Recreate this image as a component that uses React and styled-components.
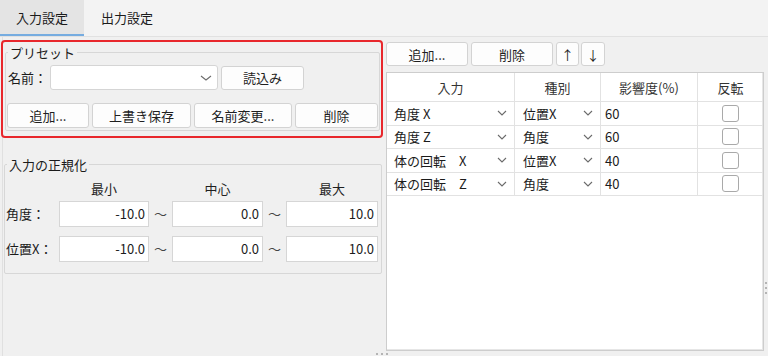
import React from "react";
import styled, { createGlobalStyle } from "styled-components";

const GlobalStyle = createGlobalStyle`
  html, body {
    margin: 0;
    padding: 0;
    background: #f0f0f0;
  }
  body {
    font-family: "Noto Sans CJK JP", "Noto Sans", sans-serif;
    font-size: 13px;
    color: #1b1b1b;
  }
  * {
    box-sizing: border-box;
  }
`;

const rows = [
  { input: "角度 X", kind: "位置X", rate: "60" },
  { input: "角度 Z", kind: "角度", rate: "60" },
  { input: "体の回転　X", kind: "位置X", rate: "40" },
  { input: "体の回転　Z", kind: "角度", rate: "40" },
];

const normRows = [
  { label: "角度：", values: ["-10.0", "0.0", "10.0"] },
  { label: "位置X：", values: ["-10.0", "0.0", "10.0"] },
];

const Chevron = ({ w = 10 }) => (
  <svg width={w} height="6" viewBox={`0 0 ${w} 6`}>
    <polyline
      points={`1,1 ${w / 2},5 ${w - 1},1`}
      fill="none"
      stroke="#6b6b6b"
      strokeWidth="1.1"
    />
  </svg>
);

const App = () => {
  return (
    <Screen>
      <GlobalStyle />
      <TabBar>
        <Tab active w={84}>入力設定</Tab>
        <Tab w={86}>出力設定</Tab>
      </TabBar>
      <Main>
        <LeftPane>
          <Highlight>
            <Group>
              <Legend>プリセット</Legend>
              <NameRow>
                <NameLabel>名前：</NameLabel>
                <Combo>
                  <Chevron w={12} />
                </Combo>
                <Button w={83}>読込み</Button>
              </NameRow>
              <ButtonRow>
                <Button w={82}>追加...</Button>
                <Button w={99}>上書き保存</Button>
                <Button w={98}>名前変更...</Button>
                <Button w={83}>削除</Button>
              </ButtonRow>
            </Group>
          </Highlight>
          <NormGroup>
            <Legend>入力の正規化</Legend>
            <NormHead>
              <span />
              <ColHead>最小</ColHead>
              <span />
              <ColHead>中心</ColHead>
              <span />
              <ColHead>最大</ColHead>
            </NormHead>
            <NormGrid>
              {normRows.map((r) => (
                <React.Fragment key={r.label}>
                  <RowLabel>{r.label}</RowLabel>
                  <NumBox>{r.values[0]}</NumBox>
                  <Tilde>〜</Tilde>
                  <NumBox>{r.values[1]}</NumBox>
                  <Tilde>〜</Tilde>
                  <NumBox>{r.values[2]}</NumBox>
                </React.Fragment>
              ))}
            </NormGrid>
          </NormGroup>
        </LeftPane>
        <RightPane>
          <Toolbar>
            <Button w={82}>追加...</Button>
            <Button w={82}>削除</Button>
            <Button w={23}>↑</Button>
            <Button w={24} style={{ marginLeft: -1 }}>↓</Button>
          </Toolbar>
          <Table>
            <HeadRow>
              <HeadCell>入力</HeadCell>
              <HeadCell>種別</HeadCell>
              <HeadCell>影響度(%)</HeadCell>
              <HeadCell last>反転</HeadCell>
            </HeadRow>
            {rows.map((r, i) => (
              <BodyRow key={i}>
                <ComboCell pad={7} chev={7}>
                  <span>{r.input}</span>
                  <Chevron />
                </ComboCell>
                <ComboCell pad={8} chev={7}>
                  <span>{r.kind}</span>
                  <Chevron />
                </ComboCell>
                <ValueCell>{r.rate}</ValueCell>
                <CheckCell>
                  <CheckBox />
                </CheckCell>
              </BodyRow>
            ))}
          </Table>
        </RightPane>
      </Main>
      <GripV>
        <Dot />
        <Dot />
        <Dot />
      </GripV>
      <GripH>
        <Dot />
        <Dot />
        <Dot />
      </GripH>
    </Screen>
  );
};

export default App;

const Screen = styled.div`
  position: relative;
  width: 768px;
  height: 356px;
  overflow: hidden;
  display: flex;
  flex-direction: column;
  background: #f0f0f0;
`;

const TabBar = styled.div`
  display: flex;
  height: 37px;
  background: #f3f3f3;
  border-bottom: 1px solid #e1e1e1;
`;

const Tab = styled.div`
  width: ${({ w }) => w}px;
  height: 36px;
  display: flex;
  align-items: center;
  justify-content: center;
  line-height: 17px;
  color: #1b1b1b;
  background: ${({ active }) => (active ? "#e4e4e4" : "transparent")};
  border-bottom: 2px solid ${({ active }) => (active ? "#76ace0" : "transparent")};
  padding-top: 1px;
`;

const Main = styled.div`
  flex: 1;
  display: flex;
  min-height: 0;
`;

const LeftPane = styled.div`
  width: 384px;
  margin-left: 2px;
  padding-top: 3px;
  border-left: 1px solid #e0e0e0;
  display: flex;
  flex-direction: column;
`;

const Highlight = styled.div`
  width: 382px;
  height: 98px;
  margin-left: -2px;
  border: 2px solid #e8272c;
  border-radius: 4px;
  padding: 2px 1px 0 2px;
`;

const Group = styled.fieldset`
  margin: 0;
  padding: 0 2px 2px 1px;
  border: 1px solid #d7d7d7;
  border-radius: 2px;
  min-width: 0;
`;

const Legend = styled.legend`
  margin-left: 1px;
  padding: 0 2px;
  line-height: 17px;
  color: #1b1b1b;
`;

const NameRow = styled.div`
  display: flex;
  align-items: center;
  margin-top: 4px;
  height: 25px;
`;

const NameLabel = styled.span`
  width: 42px;
  margin-left: 1px;
  line-height: 17px;
`;

const Combo = styled.div`
  width: 168px;
  height: 25px;
  margin-right: 3px;
  background: #ffffff;
  border: 1px solid #d5d5d5;
  border-radius: 3px;
  display: flex;
  align-items: center;
  justify-content: flex-end;
  padding-right: 5px;
`;

const Button = styled.div`
  width: ${({ w }) => w}px;
  height: 24px;
  flex: none;
  display: flex;
  align-items: center;
  justify-content: center;
  background: #fdfdfd;
  border: 1px solid #d3d3d3;
  border-radius: 3px;
  line-height: 17px;
  color: #1f1f1f;
`;

const ButtonRow = styled.div`
  display: flex;
  gap: 3px;
  margin-top: 13px;

  & > div {
    height: 25px;
  }
`;

const NormGroup = styled.fieldset`
  margin: 18px 0 0 1px;
  width: 378px;
  padding: 0 0 12px 1px;
  border: 1px solid #d7d7d7;
  border-radius: 2px;
  min-width: 0;
`;

const normCols = `
  display: grid;
  grid-template-columns: 53px 90px 23px 91px 23px 92px;
`;

const NormHead = styled.div`
  ${normCols}
  height: 24px;
  align-items: end;
`;

const NormGrid = styled.div`
  ${normCols}
  grid-template-rows: 25px 25px;
  row-gap: 10px;
  align-items: center;
  margin-top: 4px;
`;

const ColHead = styled.span`
  text-align: center;
  line-height: 17px;
  color: #1f1f1f;
`;

const RowLabel = styled.span`
  line-height: 17px;
`;

const NumBox = styled.div`
  height: 26px;
  background: #ffffff;
  border: 1px solid #d6d6d6;
  display: flex;
  align-items: center;
  justify-content: flex-end;
  padding-right: 3px;
  line-height: 17px;
`;

const Tilde = styled.span`
  text-align: center;
  color: #444;
`;

const RightPane = styled.div`
  width: 378px;
  padding: 5px 0 5px;
  display: flex;
  flex-direction: column;
  gap: 6px;
`;

const Toolbar = styled.div`
  display: flex;
  gap: 3px;
`;

const Table = styled.div`
  flex: 1;
  background: #ffffff;
  border: 1px solid #cdcdcd;
  box-shadow: inset -1px -1px 0 #e6e6e6;
`;

const gridCols = `
  display: grid;
  grid-template-columns: 128px 86px 97px 1fr;
`;

const HeadRow = styled.div`
  ${gridCols}
  height: 29px;
  border-bottom: 1px solid #e2e2e2;
`;

const HeadCell = styled.div`
  display: flex;
  align-items: center;
  justify-content: center;
  border-right: ${({ last }) => (last ? "none" : "1px solid #e2e2e2")};
  color: #333;
  line-height: 17px;
`;

const BodyRow = styled.div`
  ${gridCols}
  height: 23.5px;
  border-bottom: 1px solid #e2e2e2;
`;

const ComboCell = styled.div`
  display: flex;
  align-items: center;
  justify-content: space-between;
  padding: 0 ${({ chev }) => chev}px 0 ${({ pad }) => pad}px;
  border-right: 1px solid #e2e2e2;
  line-height: 17px;
  white-space: pre;
`;

const ValueCell = styled.div`
  display: flex;
  align-items: center;
  padding-left: 4px;
  border-right: 1px solid #e2e2e2;
  line-height: 17px;
`;

const CheckCell = styled.div`
  display: flex;
  align-items: center;
  justify-content: center;
`;

const CheckBox = styled.div`
  width: 17px;
  height: 17px;
  border: 1px solid #a9a9a9;
  border-radius: 3px;
  background: #ffffff;
`;

const GripV = styled.div`
  position: absolute;
  left: 765px;
  top: 282px;
  display: flex;
  flex-direction: column;
  gap: 3px;
`;

const GripH = styled.div`
  position: absolute;
  left: 376px;
  top: 353px;
  display: flex;
  gap: 3px;
`;

const Dot = styled.span`
  display: block;
  width: 2px;
  height: 2px;
  background: #b4b4b4;
`;
